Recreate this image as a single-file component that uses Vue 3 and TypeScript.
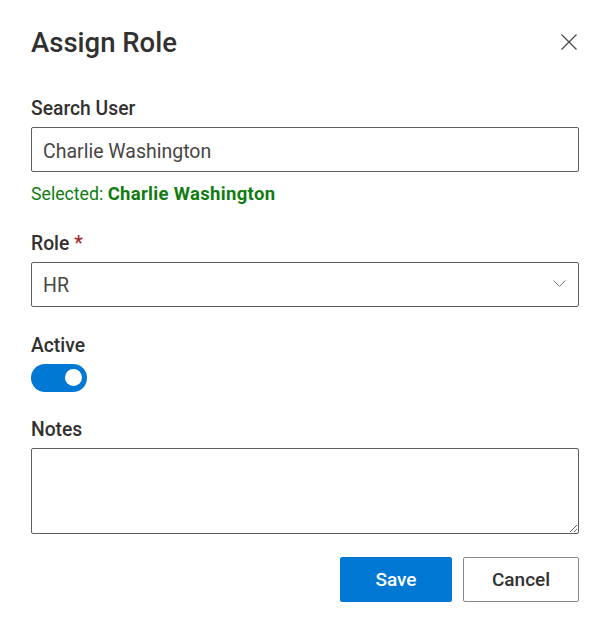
<script setup lang="ts">
import { ref } from 'vue'

const search = ref('Charlie Washington')
const role = ref('HR')
const active = ref(true)
const notes = ref('')
</script>

<template>
  <div class="dialog">
    <header class="dialog-head">
      <h2 class="title">Assign Role</h2>
      <button class="close" type="button" aria-label="Close">
        <svg width="16" height="16" viewBox="0 0 16 16" fill="none" stroke="#444" stroke-width="1.2">
          <path d="M0.5 0.5 L15.5 15.5 M15.5 0.5 L0.5 15.5" />
        </svg>
      </button>
    </header>

    <div class="field">
      <label class="label">Search User</label>
      <input v-model="search" class="control search" type="text" />
      <div class="selected">Selected: <strong>{{ search }}</strong></div>
    </div>

    <div class="field">
      <label class="label">Role <span class="req">*</span></label>
      <div class="select control">
        <span class="select-value">{{ role }}</span>
        <svg class="chevron" width="13" height="7" viewBox="0 0 13 7" fill="none" stroke="#777" stroke-width="1">
          <path d="M0.5 0.5 L6.5 6.5 L12.5 0.5" />
        </svg>
      </div>
    </div>

    <div class="field field-toggle">
      <label class="label">Active</label>
      <button class="toggle" :class="{ on: active }" type="button" @click="active = !active">
        <span class="knob"></span>
      </button>
    </div>

    <div class="field">
      <label class="label">Notes</label>
      <textarea v-model="notes" class="notes"></textarea>
    </div>

    <footer class="actions">
      <button class="btn primary" type="button">Save</button>
      <button class="btn" type="button">Cancel</button>
    </footer>
  </div>
</template>

<style>
html, body {
  background: #fff;
}
</style>

<style scoped>
.dialog {
  width: 548px;
  padding: 24px 25px 0 31px;
  font-family: Roboto, "Open Sans", sans-serif;
  color: #323130;
}

.dialog-head {
  display: flex;
  align-items: center;
  justify-content: space-between;
  height: 36px;
  margin-bottom: 36px;
}

.title {
  margin: 0;
  padding-top: 1px;
  font-size: 27.5px;
  font-weight: 500;
  line-height: 36px;
}

.close {
  display: flex;
  padding: 0;
  margin-right: 2px;
  border: 0;
  background: none;
}

.field {
  display: flex;
  flex-direction: column;
  margin-bottom: 26px;
}

.field-toggle {
  margin-bottom: 25px;
}

.label {
  height: 24px;
  margin-bottom: 7px;
  font-size: 19.3px;
  font-weight: 500;
  line-height: 26px;
}

.req {
  color: #a4262c;
}

.control {
  box-sizing: border-box;
  width: 548px;
  height: 45px;
  padding: 2px 11px 0;
  border: 1px solid #605e5c;
  border-radius: 2px;
  background: #fff;
  font-family: inherit;
  font-size: 19.5px;
  color: #484644;
  outline: none;
}

.search {
  padding-top: 4px;
}

.select {
  display: flex;
  align-items: center;
  justify-content: space-between;
}

.chevron {
  margin: -4px 1px 0 0;
}

.selected {
  height: 24px;
  margin-top: 9px;
  font-size: 17.7px;
  line-height: 26px;
  color: #107c10;
}

.selected strong {
  font-size: 18.5px;
  letter-spacing: 0.33px;
}

.toggle {
  position: relative;
  width: 56px;
  height: 28px;
  padding: 0;
  border: 0;
  border-radius: 14px;
  background: #c8c6c4;
}

.toggle.on {
  background: #0078d4;
}

.knob {
  position: absolute;
  top: 5px;
  left: 6px;
  width: 17px;
  height: 17px;
  border-radius: 50%;
  background: #fff;
}

.toggle.on .knob {
  left: 34px;
}

.notes {
  display: block;
  box-sizing: border-box;
  width: 548px;
  height: 86px;
  border: 1px solid #605e5c;
  border-radius: 2px;
  outline: none;
}

.actions {
  display: flex;
  justify-content: flex-end;
  gap: 11px;
  margin-top: -3px;
}

.btn {
  box-sizing: border-box;
  width: 116px;
  height: 45px;
  border: 1px solid #8a8886;
  border-radius: 2px;
  background: #fff;
  font-family: inherit;
  font-size: 19px;
  font-weight: 500;
  color: #323130;
}

.btn.primary {
  width: 112px;
  border-color: #0078d4;
  background: #0078d4;
  color: #fff;
}
</style>
